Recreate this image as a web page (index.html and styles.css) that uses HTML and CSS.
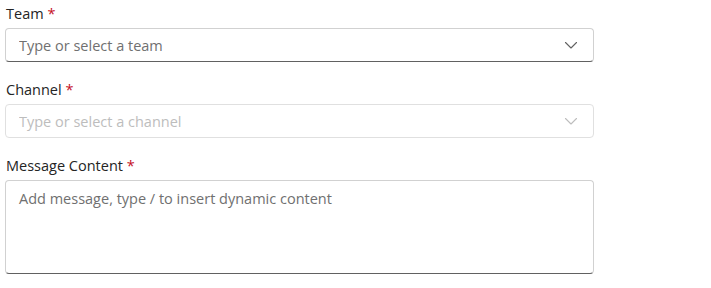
FILE: index.html
```html
<!DOCTYPE html>
<html lang="en">
<head>
    <meta charset="UTF-8">
    <meta name="viewport" content="width=device-width, initial-scale=1.0">
    <title>Post message</title>
    <link rel="stylesheet" href="styles.css">
</head>
<body>
    <form class="form">
        <div class="field">
            <label class="label" for="team">Team <span class="required">*</span></label>
            <div class="combo">
                <input class="combo-input" id="team" type="text" placeholder="Type or select a team">
                <svg class="chevron" width="14" height="14" viewBox="0 0 14 14"><path d="M1.5 4.5 L7 10 L12.5 4.5" fill="none" stroke="currentColor" stroke-width="1.1" stroke-linecap="round" stroke-linejoin="round"/></svg>
            </div>
        </div>

        <div class="field">
            <label class="label" for="channel">Channel <span class="required">*</span></label>
            <div class="combo combo-disabled">
                <input class="combo-input" id="channel" type="text" placeholder="Type or select a channel" disabled>
                <svg class="chevron" width="14" height="14" viewBox="0 0 14 14"><path d="M1.5 4.5 L7 10 L12.5 4.5" fill="none" stroke="currentColor" stroke-width="1.1" stroke-linecap="round" stroke-linejoin="round"/></svg>
            </div>
        </div>

        <div class="field">
            <label class="label" for="message">Message Content <span class="required">*</span></label>
            <textarea class="textarea" id="message" placeholder="Add message, type / to insert dynamic content"></textarea>
        </div>
    </form>
</body>
</html>
```

FILE: styles.css
```css
body {
    margin: 0;
    font-family: 'Open Sans', 'Noto Sans', sans-serif;
    font-size: 14.5px;
    color: #242424;
    background-color: #ffffff;
}

.form {
    width: 589px;
    padding-left: 5px;
    display: flex;
    flex-direction: column;
    gap: 14px;
}

.field {
    display: flex;
    flex-direction: column;
}

.label {
    display: block;
    padding: 4px 0 4px 1px;
    line-height: 20px;
    height: 20px;
}

.required {
    color: #c50f1f;
}

.combo {
    height: 34px;
    box-sizing: border-box;
    display: flex;
    align-items: center;
    border: 1px solid #d1d1d1;
    border-bottom-color: #616161;
    border-radius: 4px;
    padding: 0 15px 0 13px;
    background-color: #ffffff;
    color: #616161;
}

.combo-input {
    flex: 1;
    border: none;
    outline: none;
    padding: 0;
    font: inherit;
    color: #242424;
    background: transparent;
}

.combo-input::placeholder {
    color: #707070;
}

.combo-disabled {
    border-color: #e0e0e0;
    color: #bdbdbd;
}

.combo-disabled .combo-input::placeholder {
    color: #bdbdbd;
}

.chevron {
    flex: none;
}

.textarea {
    height: 94px;
    box-sizing: border-box;
    resize: none;
    border: 1px solid #d1d1d1;
    border-bottom-color: #616161;
    border-radius: 4px;
    padding: 8px 13px;
    font: inherit;
    line-height: 20px;
    color: #242424;
    outline: none;
}

.textarea::placeholder {
    color: #707070;
}
```
